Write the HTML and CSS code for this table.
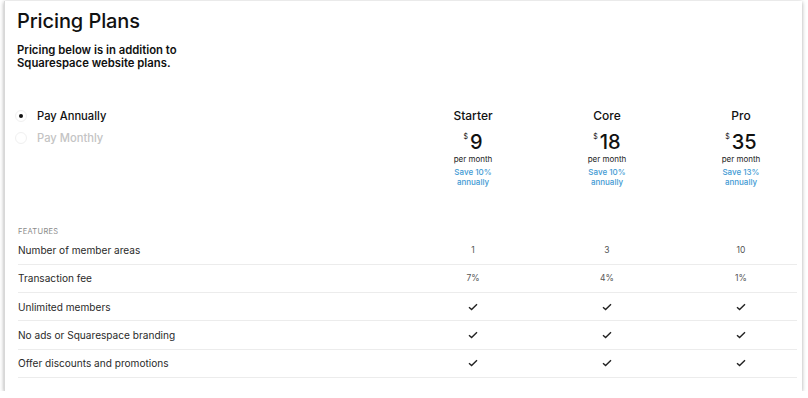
FILE: index.html
```html
<!DOCTYPE html>
<html lang="en">
<head>
<meta charset="utf-8">
<title>Pricing Plans</title>
<link rel="stylesheet" href="styles.css">
</head>
<body>
<div class="card">
  <h1 class="title">Pricing Plans</h1>
  <p class="subtitle">Pricing below is in addition to<br>Squarespace website plans.</p>

  <div class="plans">
    <div class="billing">
      <label class="option option-active"><span class="radio radio-on"></span>Pay Annually</label>
      <label class="option option-muted"><span class="radio"></span>Pay Monthly</label>
    </div>
    <div class="plan">
      <div class="plan-name">Starter</div>
      <div class="price"><span class="currency">$</span>9</div>
      <div class="per">per month</div>
      <div class="save">Save 10%<br>annually</div>
    </div>
    <div class="plan">
      <div class="plan-name">Core</div>
      <div class="price"><span class="currency">$</span>18</div>
      <div class="per">per month</div>
      <div class="save">Save 10%<br>annually</div>
    </div>
    <div class="plan">
      <div class="plan-name">Pro</div>
      <div class="price"><span class="currency">$</span>35</div>
      <div class="per">per month</div>
      <div class="save">Save 13%<br>annually</div>
    </div>
  </div>

  <div class="features-label">FEATURES</div>
  <div class="features">
    <div class="row">
      <div class="feature">Number of member areas</div>
      <div class="val">1</div><div class="val">3</div><div class="val">10</div>
    </div>
    <div class="row">
      <div class="feature">Transaction fee</div>
      <div class="val">7%</div><div class="val">4%</div><div class="val">1%</div>
    </div>
    <div class="row">
      <div class="feature">Unlimited members</div>
      <div class="val"><svg class="check" viewBox="0 0 10 8"><path d="M1 4.2 L3.6 6.6 L9 1.2"/></svg></div>
      <div class="val"><svg class="check" viewBox="0 0 10 8"><path d="M1 4.2 L3.6 6.6 L9 1.2"/></svg></div>
      <div class="val"><svg class="check" viewBox="0 0 10 8"><path d="M1 4.2 L3.6 6.6 L9 1.2"/></svg></div>
    </div>
    <div class="row">
      <div class="feature">No ads or Squarespace branding</div>
      <div class="val"><svg class="check" viewBox="0 0 10 8"><path d="M1 4.2 L3.6 6.6 L9 1.2"/></svg></div>
      <div class="val"><svg class="check" viewBox="0 0 10 8"><path d="M1 4.2 L3.6 6.6 L9 1.2"/></svg></div>
      <div class="val"><svg class="check" viewBox="0 0 10 8"><path d="M1 4.2 L3.6 6.6 L9 1.2"/></svg></div>
    </div>
    <div class="row">
      <div class="feature">Offer discounts and promotions</div>
      <div class="val"><svg class="check" viewBox="0 0 10 8"><path d="M1 4.2 L3.6 6.6 L9 1.2"/></svg></div>
      <div class="val"><svg class="check" viewBox="0 0 10 8"><path d="M1 4.2 L3.6 6.6 L9 1.2"/></svg></div>
      <div class="val"><svg class="check" viewBox="0 0 10 8"><path d="M1 4.2 L3.6 6.6 L9 1.2"/></svg></div>
    </div>
  </div>
</div>
</body>
</html>
```

FILE: styles.css
```css
* { box-sizing: border-box; }

html, body {
  margin: 0;
  padding: 0;
  background: #ffffff;
}

body {
  font-family: Inter, "Liberation Sans", Arial, sans-serif;
  color: #1a1a1a;
  padding: 1px 6px 0 4px;
}

.card {
  background: #fff;
  width: 798px;
  height: 390px;
  padding: 8px 5px 0 13px;
  border-left: 1px solid #d8d8d8;
  box-shadow: 0 1px 4px rgba(0, 0, 0, 0.35);
}

.title {
  margin: 0;
  font-size: 20px;
  line-height: 24px;
  font-weight: 500;
  color: #111;
  letter-spacing: -0.1px;
  margin-left: -1px;
}

.subtitle {
  margin: 10.5px 0 0 -1px;
  font-size: 11.3px;
  line-height: 13px;
  font-weight: 600;
  color: #111;
}

.plans,
.row {
  display: grid;
  grid-template-columns: 1fr repeat(3, 112px);
  column-gap: 22px;
}

.plans {
  margin-top: 38px;
  height: 118px;
}

.billing {
  display: flex;
  flex-direction: column;
  gap: 6px;
}

.option {
  display: flex;
  align-items: center;
  gap: 10px;
  font-size: 11.2px;
  line-height: 16px;
  font-weight: 500;
}

.option-active { color: #111; }
.option-muted { color: #c4c4c4; }

.radio {
  width: 12px;
  height: 12px;
  border-radius: 50%;
  border: 1px solid #f0f0f0;
  display: flex;
  align-items: center;
  justify-content: center;
  margin-left: -3px;
}

.radio-on::after {
  content: "";
  width: 4px;
  height: 4px;
  border-radius: 50%;
  background: #111;
}

.plan {
  display: flex;
  flex-direction: column;
  align-items: center;
  text-align: center;
}

.plan-name {
  font-size: 12px;
  line-height: 16px;
  font-weight: 500;
  color: #111;
}

.price {
  margin-top: 7.4px;
  font-size: 20px;
  line-height: 22px;
  font-weight: 500;
  color: #111;
  display: flex;
  align-items: flex-start;
}

.currency {
  font-size: 7px;
  line-height: 10px;
  font-weight: 400;
  margin-right: 2px;
  margin-top: 1px;
}

.per {
  margin-top: 1px;
  font-size: 8px;
  line-height: 10px;
  color: #222;
}

.save {
  margin-top: 3px;
  font-size: 8px;
  line-height: 10.5px;
  font-weight: 500;
  color: #3f9ad4;
}

.features-label {
  font-size: 7.5px;
  line-height: 10px;
  letter-spacing: 0.3px;
  color: #8a8a8a;
  margin-top: 1px;
}

.features {
  margin-top: 0;
}

.row {
  height: 28.3px;
  align-items: center;
  border-bottom: 1px solid #ececec;
}

.feature {
  font-size: 10.1px;
  color: #2a2a2a;
}

.val {
  text-align: center;
  font-size: 8.5px;
  color: #555;
  display: flex;
  justify-content: center;
  align-items: center;
}

.check {
  width: 10px;
  height: 8px;
  fill: none;
  stroke: #222;
  stroke-width: 1.4;
}
```
